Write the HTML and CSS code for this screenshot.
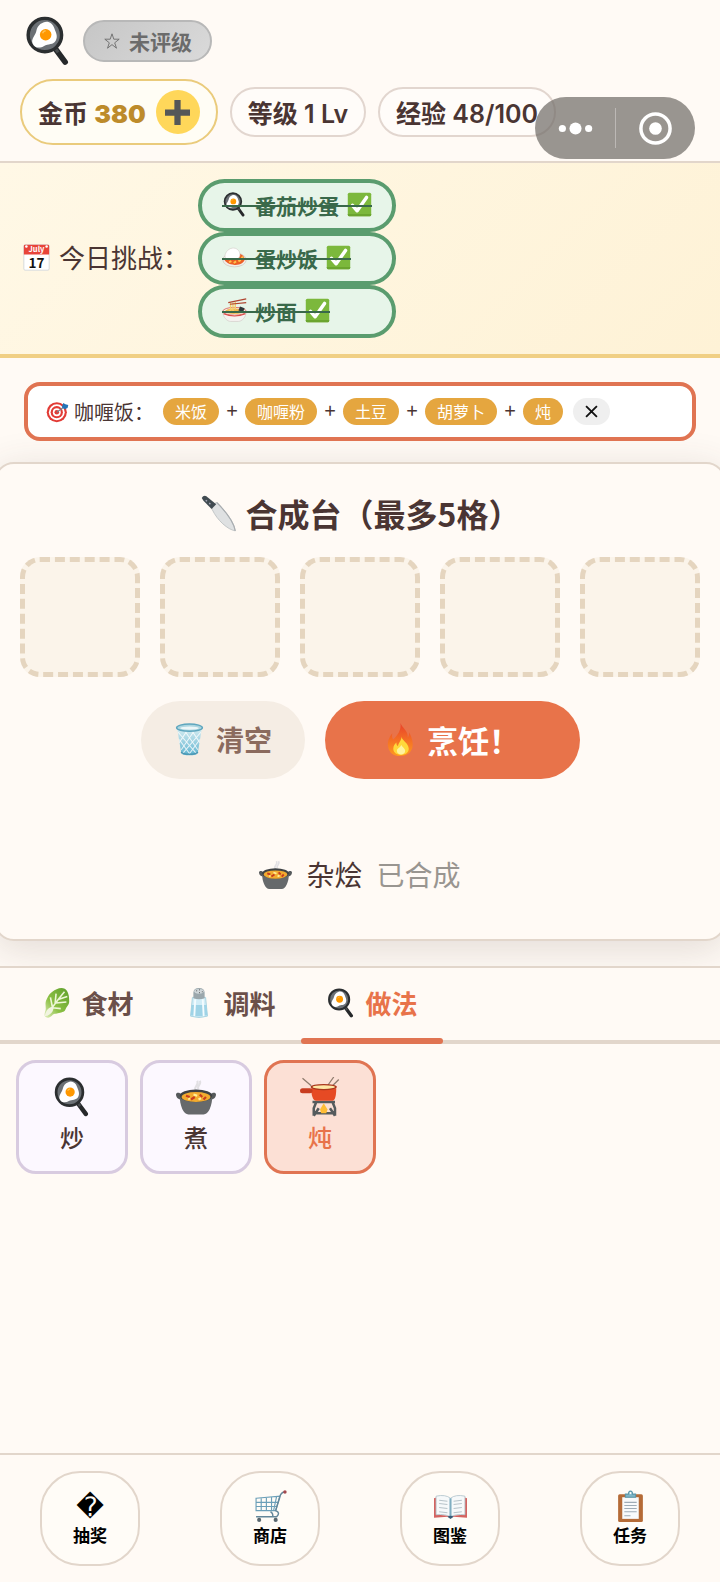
FILE: index.html
```html
<!DOCTYPE html>
<html lang="zh-CN">
<head>
    <meta charset="UTF-8">
    <meta name="viewport" content="width=device-width, initial-scale=1.0">
    <title>合成台</title>
    <link rel="stylesheet" href="styles.css">
</head>
<body>
    <!-- 图标 -->
    <svg class="sprite" aria-hidden="true">
        <defs>
            <linearGradient id="fireGrad" x1="0" y1="0" x2="0" y2="1">
                <stop offset="0" stop-color="#e8402a"/>
                <stop offset="1" stop-color="#ff9a1f"/>
            </linearGradient>
            <linearGradient id="leafGrad" x1="1" y1="0" x2="0" y2="1">
                <stop offset="0" stop-color="#5f9f2c"/>
                <stop offset="0.6" stop-color="#8cc044"/>
                <stop offset="1" stop-color="#e3efc0"/>
            </linearGradient>
            <linearGradient id="binGrad" x1="0" y1="0" x2="0" y2="1">
                <stop offset="0" stop-color="#d9eef2"/>
                <stop offset="1" stop-color="#5fb4d0"/>
            </linearGradient>
        </defs>
        <symbol id="pan" viewBox="0 0 32 32">
            <path d="M20 20l7 9.500" stroke="#26282a" stroke-width="3.600" stroke-linecap="round"/>
            <path d="M20 20l2.500 3.300" stroke="#4a4e50" stroke-width="2"/>
            <circle cx="14" cy="12.200" r="10.700" fill="#6b7075" stroke="#2b2e30" stroke-width="2.200"/>
            <path d="M13 4.200c3-1.500 6 .5 7 3.500s2.500 5 1 8-5 2-7.500 3.500-6 1.500-7.300-1.500 1.600-5 2.300-8 2-4.500 4.500-5.500z" fill="#fff"/>
            <circle cx="14.500" cy="12" r="3.700" fill="#ff9800"/>
            <path d="M12.500 11a2.500 2.500 0 0 1 2-1.500" stroke="#ffc04d" fill="none"/>
        </symbol>
        <symbol id="rice" viewBox="0 0 32 32">
            <ellipse cx="16" cy="19" rx="15" ry="9" fill="#f1eeea" stroke="#cfc8c0"/>
            <path d="M3 18c3-3 20-14 26-1 1 5-6 9-13 8.500S4 22 3 18z" fill="#ec5f25"/>
            <path d="M9 22l3-1.500M15 23l3-2M21 21l3-2M25 15l2 2" stroke="#ffc24a" stroke-width="2.500"/>
            <path d="M4 16c-1-5 3-11 9-12s10 4 10 8-2 6-7 6-10 1-12-2z" fill="#fff" stroke="#d3cec8" stroke-width=".8"/>
        </symbol>
        <symbol id="noodles" viewBox="0 0 32 32">
            <path d="M1 17h30c0 8-6 13-10 13h-10c-4 0-10-5-10-13z" fill="#f5f2f0" stroke="#cfc9c5" stroke-width=".8"/>
            <path d="M2 20q14 6 28 0" stroke="#dc4b4b" stroke-width="1.400" fill="none"/>
            <ellipse cx="16" cy="17" rx="15" ry="5" fill="#f4efea" stroke="#d9534b"/>
            <ellipse cx="16" cy="17" rx="12" ry="3.500" fill="#eeb650"/>
            <path d="M9 17q3-5 6 0t6 0M11 6v11M14 6v11M17 5v10" stroke="#f5cd68" stroke-width="1.800" fill="none"/>
            <path d="M8 6L31 1M10 8l21-2" stroke="#b0442f" stroke-width="1.600"/>
            <path d="M23 11l6 2-2 5-6-2z" fill="#30383a"/>
        </symbol>
        <symbol id="check" viewBox="0 0 32 32">
            <rect x="1" y="1" width="30" height="30" rx="2" fill="#7cb83c"/>
            <path d="M1 28h30v1a2 2 0 0 1-2 2H3a2 2 0 0 1-2-2z" fill="#6ba52f"/>
            <path d="M7 17l6 7L25 7" stroke="#fff" stroke-width="4.500" fill="none" stroke-linecap="round" stroke-linejoin="round"/>
        </symbol>
        <symbol id="target" viewBox="0 0 32 32">
            <circle cx="15" cy="17" r="14" fill="#e23b35"/>
            <circle cx="15" cy="17" r="11" fill="#fff"/>
            <circle cx="15" cy="17" r="8.500" fill="#e23b35"/>
            <circle cx="15" cy="17" r="5.500" fill="#fff"/>
            <circle cx="15" cy="17" r="3.200" fill="#e23b35"/>
            <path d="M15 17l11-8" stroke="#74808a" stroke-width="1.500"/>
            <path d="M22 10l2-6 3 2 4 1-1 4-4 2z" fill="#2374b8"/>
        </symbol>
        <symbol id="knife" viewBox="0 0 32 32">
            <path d="M11 8l3.500-1.500C21 13 29 22 30.500 31 24 30 15 22 10.500 12.500z" fill="#dfe1e2" stroke="#b9bdbf" stroke-width=".7"/>
            <path d="M14.500 6.500C21 13 29 22 30.500 31" stroke="#a9adb0" fill="none"/>
            <path d="M1.500 2.500q1.500-2.500 4-1.500L14 8l-4 4-7-7z" fill="#414b51"/>
            <path d="M5 4.500l1 1m2 1.500l1 1" stroke="#aab" stroke-width="1.200"/>
        </symbol>
        <symbol id="bin" viewBox="0 0 32 32">
            <path d="M4 5l4 24c.5 3 15.500 3 16 0l4-24z" fill="url(#binGrad)"/>
            <path d="M5 9l18 21M6 16l11 15M11 7l13 19M18 7l8 12M27 9L9 30M26 16L15 31M21 7L8 26M14 7L6 19" stroke="#fff" stroke-width="1" opacity=".8"/>
            <ellipse cx="16" cy="4.500" rx="12.500" ry="3.500" fill="#acd6e0" stroke="#5ea6be" stroke-width="1.400"/>
            <ellipse cx="16" cy="5" rx="9" ry="1.500" fill="#ecf6f8"/>
            <path d="M8 28c1 3 15 3 16 0" fill="none" stroke="#4995b2" stroke-width="1.500"/>
        </symbol>
        <symbol id="fire" viewBox="0 0 32 32">
            <path d="M16 0c1 4 8 8 7 14 1-1 1.500-3 1.500-5 3 6 4 11 3 15-1.500 5-6 8-12 8S5 29 4 23c-1-5 1-9 4-13-.5 3 0 5 1 6 4-4 8-9 7-16z" fill="url(#fireGrad)"/>
            <path d="M17 13c0 4 7 6 7 12 0 4-4 6-7.500 6S9 29 9 25c0-3 2-5 3-6 0 2 .5 3 1.500 3.500C14 19 17 17 17 13z" fill="#ffd83b"/>
            <path d="M17 21c0 2 3.500 3 3.500 6 0 2.500-2 3.500-4 3.500s-4-1-4-3.500 3-3 4.500-6z" fill="#fff3a0"/>
        </symbol>
        <symbol id="stew" viewBox="0 0 32 32">
            <path d="M16 11c-3-3 3-4 1-8M18 10c-2-3 3-4 1-7" stroke="#e2e0e3" stroke-width="1.600" fill="none"/>
            <path d="M0 14c0-2 3-2 4.500 0v4c-2.500 0-4.500-1.500-4.500-4zM32 14c0-2-3-2-4.500 0v4c2.500 0 4.500-1.500 4.500-4z" fill="#55595b"/>
            <path d="M3 15h26c0 8-3 15-7 15h-12c-4 0-7-7-7-15z" fill="#66696b"/>
            <ellipse cx="16" cy="15" rx="13" ry="5" fill="#3f4244"/>
            <ellipse cx="16" cy="16" rx="11.500" ry="4" fill="#f2ab2f"/>
            <path d="M8 15l3 1M12 18l3-2M19 14l2 2M22 18l2-2" stroke="#c83c20" stroke-width="1.800"/>
            <path d="M14 14l3 1M18 18l2-1M10 17l1 1" stroke="#fff09a" stroke-width="1.600"/>
        </symbol>
        <symbol id="lettuce" viewBox="0 0 32 32">
            <path d="M4 31c-3-2 0-6 0-9 0-4-1-6 1-10s3-6 6-8 6-4 10-4 6 3 7 6 1 6 1 9-3 5-4 8-5 3-8 4-4 0-6 2-5 4-7 2z" fill="url(#leafGrad)"/>
            <path d="M5 29C11 21 17 12 24 4M11 20L9 10M14 16l1-10M11 21l9 1M15 16l11-1M18 12l9-3" stroke="#eef7d8" stroke-width="1.700" fill="none"/>
            <path d="M3 30c1-7 5-10 9-10 1 5-3 9-9 10z" fill="#f1f4e0"/>
        </symbol>
        <symbol id="salt" viewBox="0 0 32 32">
            <path d="M9 10h14l2 20q-9 3-18 0z" fill="#d2edf7" stroke="#a8d2df"/>
            <path d="M8 18h16l1 11q-9 2-18 0z" fill="#9fd3e6"/>
            <path d="M12 12l-1 18M20 12l1 18" stroke="#f3fbfe" stroke-width="2"/>
            <path d="M10 5q0-5 6-5t6 5v6q-6 2-12 0z" fill="#9ba7ac"/>
            <ellipse cx="16" cy="3.500" rx="5" ry="2.500" fill="#cfd6d9"/>
            <path d="M13 3h1m2-1h1m2 2h1m-4 1h1" stroke="#555"/>
        </symbol>
        <symbol id="fondue" viewBox="0 0 32 32">
            <path d="M9 7L2 1M22 7l5-7M26 7l5-5" stroke="#8f7b6d" stroke-width="1"/>
            <path d="M10 20h18M13 20l-2 5v6M26 20l2 5v6M11 31l4-6M28 31l-4-6M11 27l3 2h11l3-2" stroke="#555b5d" stroke-width="2" fill="none"/>
            <path d="M19 21l3 5-1 3h-4l-1-3z" fill="#ffbd35"/>
            <path d="M9 9h20c0 6-1 10-3 10H13c-3 0-4-5-4-10z" fill="#e64a24"/>
            <rect x="0" y="9" width="10" height="4" rx="2" fill="#c83d20"/>
            <ellipse cx="19" cy="8" rx="10.500" ry="2.500" fill="#a9361c"/>
            <ellipse cx="19" cy="8" rx="9" ry="1.500" fill="#ffe7a5"/>
        </symbol>
        <symbol id="cart" viewBox="0 0 32 32">
            <path d="M2 8l23-2-4 14H2zM2 12h22M2 16h20M7 8v12M12 7v13M17 7v13M22 6l-3 14" stroke="#6b9fb8" stroke-width="1.100" fill="none"/>
            <path d="M30 2q-4 0-5 5l-4 13q5 2 1 6H2M16 21q3 2 2 5" stroke="#64879a" stroke-width="1.400" fill="none"/>
            <circle cx="30" cy="2" r="1.700" fill="#a5484e"/>
            <circle cx="5" cy="29" r="2" fill="#58666e"/>
            <circle cx="21" cy="29" r="2" fill="#58666e"/>
        </symbol>
        <symbol id="book" viewBox="0 0 32 32">
            <path d="M0 8l3-1v17l13 1 13-1V7l3 1v19l-13-1-3 1-3-1-13 1z" fill="#d46360"/>
            <path d="M2 6q9-2 14 2 5-4 14-2v18q-9-1-14 2-5-3-14-2z" fill="#f6f9fa" stroke="#afc2cb" stroke-width=".8"/>
            <path d="M16 8v18" stroke="#7faec1" stroke-width="2"/>
            <path d="M5 10l8 1M5 13l8 1M5 17l8 1M5 21l8 1M19 11l8-1M19 14l8-1M19 18l8-1M19 22l8-1" stroke="#b7c3c9"/>
            <path d="M13 26q3-2 6 0l-3 2z" fill="#365d79"/>
        </symbol>
        <symbol id="clipboard" viewBox="0 0 32 32">
            <rect x="4" y="4" width="24" height="27" rx="1.500" fill="#b56b37"/>
            <path d="M8 7h16v21H8z" fill="#f8fafb"/>
            <path d="M10 12h12M10 15h12M10 18h12M10 21h12M10 25h6" stroke="#9eacb7"/>
            <path d="M11 7V4h3q0-3 2-3t2 3h3v3z" fill="#7eb6c7" stroke="#5a98ac"/>
            <circle cx="16" cy="3" r="1" fill="#fff"/>
        </symbol>
    </svg>

    <div class="app">
        <header class="header">
            <div class="brand">
                <svg class="logo"><use href="#pan"/></svg>
                <span class="rating"><svg class="star" viewBox="0 0 20 20"><path d="M10 2l2 6h6l-5 4 2 6-5-4-5 4 2-6-5-4h6z" fill="none" stroke="#6b6b6b"/></svg>未评级</span>
            </div>
            <div class="stats">
                <div class="stat coin">
                    <span>金币 <b>380</b></span>
                    <button class="plus-btn" aria-label="增加金币">
                        <svg viewBox="0 0 24 24"><path d="M9 0h6v9h9v6h-9v9H9v-9H0V9h9z" fill="#555758"/></svg>
                    </button>
                </div>
                <div class="stat">等级 1 Lv</div>
                <div class="stat">经验 48/100</div>
            </div>
            <div class="capsule">
                <button aria-label="更多">
                    <svg viewBox="0 0 36 36" fill="#fff"><circle cx="4.500" cy="18" r="3.700"/><circle cx="18" cy="18" r="6.200"/><circle cx="31.500" cy="18" r="3.700"/></svg>
                </button>
                <button aria-label="关闭小程序">
                    <svg viewBox="0 0 36 36"><circle cx="18" cy="18" r="15" fill="none" stroke="#fff" stroke-width="3.600"/><circle cx="18" cy="18" r="6.500" fill="#fff"/></svg>
                </button>
            </div>
        </header>

        <!-- 今日挑战 -->
        <section class="challenge">
            <div class="challenge-label">
                <svg class="calendar" viewBox="0 0 32 32">
                    <rect x="1" y="1" width="30" height="30" rx="1.500" fill="#fff" stroke="#cfd4d8"/>
                    <path d="M1 2.500a1.500 1.500 0 0 1 1.500-1.500h27a1.500 1.500 0 0 1 1.500 1.500v10h-30z" fill="#e8443a"/>
                    <circle cx="4" cy="3" r="1.500" fill="#fff"/>
                    <circle cx="28" cy="3" r="1.500" fill="#fff"/>
                    <text x="16" y="10" font-size="9" font-weight="bold" text-anchor="middle" fill="#fff">July</text>
                    <text x="16" y="28" font-size="16" font-weight="bold" text-anchor="middle" fill="#111">17</text>
                </svg>
                今日挑战：
            </div>
            <ul class="challenge-list">
                <li><span class="done"><svg class="emoji"><use href="#pan"/></svg>番茄炒蛋<svg class="emoji"><use href="#check"/></svg></span></li>
                <li><span class="done"><svg class="emoji"><use href="#rice"/></svg>蛋炒饭<svg class="emoji"><use href="#check"/></svg></span></li>
                <li><span class="done"><svg class="emoji"><use href="#noodles"/></svg>炒面<svg class="emoji"><use href="#check"/></svg></span></li>
            </ul>
        </section>

        <!-- 菜谱提示 -->
        <section class="recipe">
            <span class="recipe-name"><svg class="emoji"><use href="#target"/></svg>咖喱饭：</span>
            <span class="chip">米饭</span>
            <span class="op">+</span>
            <span class="chip">咖喱粉</span>
            <span class="op">+</span>
            <span class="chip">土豆</span>
            <span class="op">+</span>
            <span class="chip">胡萝卜</span>
            <span class="op">+</span>
            <span class="chip">炖</span>
            <button class="close-btn" aria-label="关闭">
                <svg viewBox="0 0 12 12"><path d="M1 1l10 10M11 1L1 11" stroke="#111" stroke-width="1.700"/></svg>
            </button>
        </section>

        <!-- 合成台 -->
        <main class="bench">
            <h1><svg class="emoji"><use href="#knife"/></svg>合成台（最多5格）</h1>
            <div class="slots">
                <div class="slot"></div>
                <div class="slot"></div>
                <div class="slot"></div>
                <div class="slot"></div>
                <div class="slot"></div>
            </div>
            <div class="actions">
                <button class="clear-btn"><svg class="emoji"><use href="#bin"/></svg>清空</button>
                <button class="cook-btn"><svg class="emoji"><use href="#fire"/></svg>烹饪！</button>
            </div>
            <div class="result">
                <svg class="emoji"><use href="#stew"/></svg>
                <span>杂烩</span>
                <span class="result-state">已合成</span>
            </div>
        </main>

        <nav class="tabs">
            <button class="tab"><svg class="emoji"><use href="#lettuce"/></svg>食材</button>
            <button class="tab"><svg class="emoji"><use href="#salt"/></svg>调料</button>
            <button class="tab active"><svg class="emoji"><use href="#pan"/></svg>做法</button>
        </nav>
        <section class="items">
            <button class="item"><svg><use href="#pan"/></svg>炒</button>
            <button class="item"><svg><use href="#stew"/></svg>煮</button>
            <button class="item selected"><svg><use href="#fondue"/></svg>炖</button>
        </section>

        <footer class="bottom-nav">
            <button><span class="unknown">&#xFFFD;</span>抽奖</button>
            <button><svg><use href="#cart"/></svg>商店</button>
            <button><svg><use href="#book"/></svg>图鉴</button>
            <button><svg><use href="#clipboard"/></svg>任务</button>
        </footer>
    </div>
</body>
</html>
```
FILE: styles.css
```css
* {
    box-sizing: border-box;
}
body {
    margin: 0;
    font-family: "Noto Sans CJK SC", sans-serif;
    background-color: #fffaf5;
    color: #4a3533;
}
button {
    font-family: inherit;
    color: inherit;
    border: none;
    padding: 0;
    cursor: pointer;
}
.sprite {
    position: absolute;
    width: 0;
    height: 0;
}
.emoji {
    width: 1em;
    height: 1em;
    flex-shrink: 0;
}
.app {
    display: flex;
    flex-direction: column;
    min-height: 100vh;
    overflow: hidden;
}

/* header */
.header {
    position: relative;
    padding: 15px 20px 16px;
    border-bottom: 2px solid #e2d6cb;
}
.brand {
    display: flex;
    align-items: center;
    gap: 10px;
    height: 52px;
    margin-bottom: 12px;
}
.logo {
    width: 50px;
    height: 50px;
    margin-left: 3px;
}
.rating {
    display: flex;
    align-items: center;
    gap: 8px;
    height: 42px;
    padding: 0 18px;
    border: 2px solid #b8b8b8;
    border-radius: 21px;
    background: linear-gradient(135deg, #c6c6c6, #dadada);
    color: #6b6b6b;
    font-size: 21px;
    font-weight: bold;
}
.star {
    width: 18px;
    height: 18px;
}
.stats {
    display: flex;
    align-items: center;
    gap: 12px;
}
.stat {
    display: flex;
    align-items: center;
    height: 50px;
    padding: 0 16px;
    border: 2px solid #e2d6cf;
    border-radius: 33px;
    background-color: #fffcf9;
    font-family: Inter, "Noto Sans CJK SC", sans-serif;
    font-size: 25px;
    font-weight: 600;
    white-space: nowrap;
}
.coin {
    height: 66px;
    gap: 10px;
    border-color: #eacb7c;
    background-color: #fffdf5;
}
.coin b {
    color: #bd8b2b;
}
.plus-btn {
    display: flex;
    align-items: center;
    justify-content: center;
    width: 44px;
    height: 44px;
    border-radius: 50%;
    background-color: #ffd75a;
}
.plus-btn svg {
    width: 25px;
    height: 25px;
}
.capsule {
    position: absolute;
    right: 25px;
    bottom: 2px;
    display: flex;
    width: 160px;
    height: 62px;
    border-radius: 31px;
    background-color: rgba(110, 105, 101, 0.7);
}
.capsule button {
    flex: 1;
    display: flex;
    align-items: center;
    justify-content: center;
    background: none;
}
.capsule button + button {
    position: relative;
}
.capsule button + button::before {
    content: "";
    position: absolute;
    left: 0;
    top: 11px;
    bottom: 11px;
    width: 1px;
    background-color: #bcb8b5;
}
.capsule svg {
    width: 35px;
    height: 35px;
}

/* challenge */
.challenge {
    display: flex;
    align-items: center;
    gap: 9px;
    padding: 16px 23px;
    border-bottom: 4px solid #f0cf84;
    background: linear-gradient(135deg, #fff8e6, #fef2d6);
}
.challenge-label {
    display: flex;
    align-items: center;
    gap: 9px;
    padding-bottom: 3px;
    font-size: 26px;
    line-height: 32px;
}
.calendar {
    width: 27px;
    height: 27px;
}
.challenge-list {
    margin: 0;
    padding: 0;
    list-style: none;
}
.challenge-list li {
    display: flex;
    align-items: center;
    height: 53px;
    padding: 0 20px 2px;
    border: 4px solid #5a9c6e;
    border-radius: 27px;
    background-color: #e7f5e9;
    color: #39694a;
    font-size: 21px;
    font-weight: bold;
}
.done {
    position: relative;
    display: flex;
    align-items: center;
    gap: 8px;
}
.done .emoji {
    width: 25px;
    height: 25px;
}
.done::after {
    content: "";
    position: absolute;
    left: 0;
    right: 0;
    top: 50%;
    height: 2px;
    background-color: #39694a;
}

/* recipe */
.recipe {
    display: flex;
    align-items: center;
    height: 59px;
    margin: 24px 24px 21px;
    padding: 0 18px;
    border: 4px solid #e07452;
    border-radius: 16px;
    background-color: #fff;
    position: relative;
    z-index: 1;
}
.recipe-name {
    display: flex;
    align-items: center;
    gap: 5px;
    margin-right: 9px;
    font-size: 20px;
}
.recipe-name .emoji {
    width: 23px;
    height: 23px;
}
.chip {
    padding: 0 12px;
    border-radius: 14px;
    background-color: #e5a63f;
    color: #fff;
    font-size: 16px;
    line-height: 27px;
}
.op {
    width: 26px;
    padding-bottom: 3px;
    text-align: center;
    font-size: 20px;
    line-height: 24px;
}
.close-btn {
    display: flex;
    align-items: center;
    justify-content: center;
    width: 37px;
    height: 27px;
    margin-left: 10px;
    border-radius: 14px;
    background-color: #efefef;
}
.close-btn svg {
    width: 13px;
    height: 13px;
}

/* bench */
.bench {
    height: 479px;
    margin: 0 -6px 25px;
    padding: 26px 24px 0;
    border: 2px solid #e2d6cb;
    border-radius: 20px;
    background-color: #fffaf5;
    box-shadow: 0 8px 40px rgba(74, 53, 51, 0.16);
}
h1 {
    display: flex;
    align-items: center;
    justify-content: center;
    gap: 9px;
    margin: 0 0 20px;
    font-size: 32px;
    line-height: 47px;
}
h1 .emoji {
    width: 37px;
    height: 37px;
}
.slots {
    display: grid;
    grid-template-columns: repeat(5, 1fr);
    gap: 20px;
}
.slot {
    aspect-ratio: 1;
    border: 5px dashed #e5d5bf;
    border-radius: 20px;
    background-color: #fbf4ea;
}
.actions {
    display: flex;
    justify-content: center;
    gap: 20px;
    margin-top: 24px;
}
.actions button {
    display: flex;
    align-items: center;
    justify-content: center;
    gap: 10px;
    height: 78px;
    padding-bottom: 2px;
    border-radius: 39px;
    font-size: 28px;
    font-weight: bold;
}
.actions .emoji {
    width: 33px;
    height: 33px;
}
.clear-btn {
    width: 164px;
    background-color: #f5ede4;
    color: #8b6b5e;
}
.actions .cook-btn {
    width: 255px;
    background-color: #e8734a;
    color: #fff;
    font-size: 31px;
}
.result {
    display: flex;
    align-items: center;
    justify-content: center;
    gap: 14px;
    margin-top: 74px;
    font-size: 28px;
    line-height: 42px;
}
.result .emoji {
    width: 33px;
    height: 33px;
}
.result-state {
    color: #999590;
}

/* tabs */
.tabs {
    position: relative;
    display: flex;
    height: 78px;
    padding: 0 17px;
    border-top: 2px solid #e2d6cb;
    border-bottom: 4px solid #e2d6cb;
    background-color: #fffaf5;
}
.tab {
    position: relative;
    display: flex;
    align-items: center;
    justify-content: center;
    gap: 9px;
    width: 142px;
    padding-bottom: 3px;
    background: none;
    color: #6b4f49;
    font-size: 26px;
    font-weight: bold;
}
.tab .emoji {
    width: 30px;
    height: 30px;
}
.tab.active {
    color: #e8734a;
}
.tab.active::after {
    content: "";
    position: absolute;
    left: 0;
    right: 0;
    bottom: -4px;
    height: 6px;
    border-radius: 3px;
    background-color: #e07452;
}
.items {
    display: flex;
    flex: 1;
    align-items: flex-start;
    gap: 12px;
    padding: 16px;
}
.item {
    display: flex;
    flex-direction: column;
    align-items: center;
    justify-content: center;
    width: 112px;
    height: 114px;
    border: 3px solid #d8cbe0;
    border-radius: 20px;
    background-color: #fcf8ff;
    font-size: 24px;
    font-weight: 500;
    line-height: 40px;
}
.item svg {
    width: 40px;
    height: 40px;
}
.item.selected {
    border-color: #e07452;
    background-color: #fce0d5;
    color: #e8734a;
}

/* bottom nav */
.bottom-nav {
    display: flex;
    justify-content: space-around;
    padding: 16px 0;
    border-top: 2px solid #e2d6cb;
}
.bottom-nav button {
    display: flex;
    flex-direction: column;
    align-items: center;
    justify-content: center;
    width: 100px;
    height: 95px;
    border: 2px solid #e2d6cb;
    border-radius: 40px;
    background-color: #fffcf7;
    color: #000;
    font-size: 17px;
    font-weight: bold;
    line-height: 24px;
}
.bottom-nav svg {
    width: 33px;
    height: 33px;
}
.unknown {
    font-family: "DejaVu Sans", sans-serif;
    font-size: 27px;
    font-weight: normal;
    line-height: 33px;
}
```
